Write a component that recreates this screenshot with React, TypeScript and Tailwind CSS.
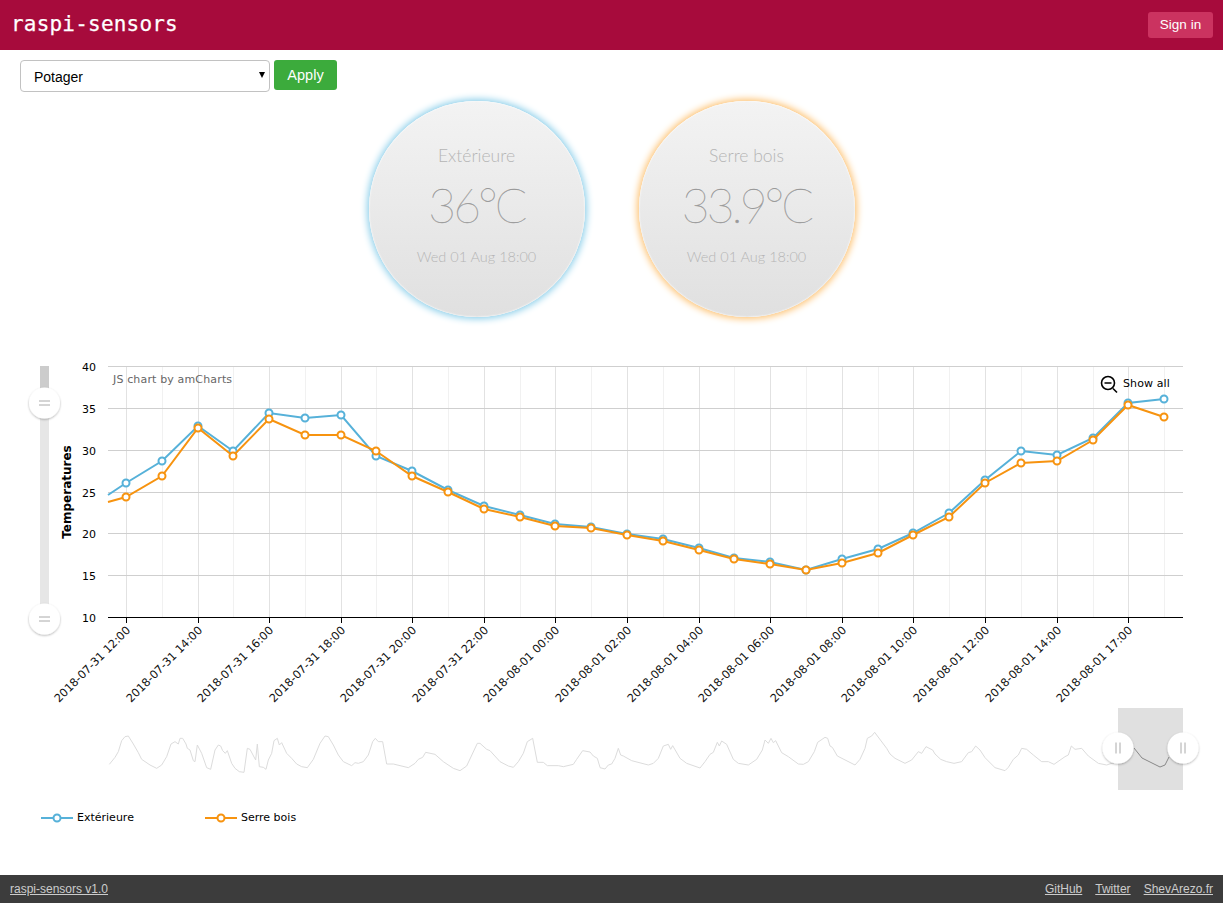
const xs = [126, 162, 198, 233, 269, 305, 341, 376, 412, 448, 484, 520, 555, 591, 627, 663, 699, 734, 770, 806, 842, 878, 913, 949, 985, 1021, 1057, 1093, 1128, 1164];
const blue = [483, 461, 426, 451, 413, 418, 415, 456, 471, 490, 506, 515, 524, 527, 534, 539, 548, 558, 562, 570, 559, 549, 533, 513, 480, 451, 455, 438, 403, 399];
const orange = [497, 476, 428, 456, 419, 435, 435, 451, 476, 492, 509, 517, 526, 528, 535, 541, 550, 559, 564, 570, 563, 553, 535, 517, 483, 463, 461, 440, 405, 417];

const gridY = [366.5, 408.5, 450.5, 492.5, 533.5, 575.5];
const yLabels = [["40", 371], ["35", 413], ["30", 455], ["25", 497], ["20", 538], ["15", 580], ["10", 622]] as const;

const ticks = [
  [126, "2018-07-31 12:00"],
  [198, "2018-07-31 14:00"],
  [269, "2018-07-31 16:00"],
  [341, "2018-07-31 18:00"],
  [412, "2018-07-31 20:00"],
  [484, "2018-07-31 22:00"],
  [555, "2018-08-01 00:00"],
  [627, "2018-08-01 02:00"],
  [699, "2018-08-01 04:00"],
  [770, "2018-08-01 06:00"],
  [842, "2018-08-01 08:00"],
  [913, "2018-08-01 10:00"],
  [985, "2018-08-01 12:00"],
  [1057, "2018-08-01 14:00"],
  [1128, "2018-08-01 17:00"],
] as const;

// scrollbar graph, read off the picture in 3x coordinates
const scrollA = [[28,133],[45,112],[55,95],[65,62],[75,50],[85,48],[100,72],[115,98],[125,118],[150,135],[170,145],[185,135],[200,110],[213,72],[225,65],[235,72],[240,55],[248,55],[258,72],[262,85],[270,90],[280,122],[285,125],[292,75],[305,100],[320,143],[332,148],[345,90],[355,75],[362,78],[368,92],[376,100],[382,92],[395,130],[405,145],[418,155],[432,157],[442,85],[450,88],[467,120],[472,72],[478,140],[490,142],[498,148],[505,120],[515,100],[522,62],[532,55],[538,75],[545,68],[560,100],[575,115],[590,132],[605,140],[622,143],[640,118],[660,70],[675,48],[685,50],[700,75],[715,105],[730,125],[755,137],[765,128],[775,130],[790,125],[805,105],[818,65],[826,55],[835,65],[848,65],[860,132],[880,132],[925,143],[945,130],[955,118],[968,112],[977,97],[1005,103],[1030,125],[1060,145],[1080,152],[1100,138],[1132,70],[1140,70],[1160,88],[1170,92],[1200,125],[1225,138],[1240,142],[1255,125],[1270,100],[1282,65],[1298,55],[1312,127],[1330,127],[1342,137],[1375,137],[1390,140],[1420,133],[1430,118],[1448,92],[1470,96],[1480,108],[1492,115],[1500,142]];
const scrollB = [[0,143],[15,147],[25,135],[35,132],[45,115],[55,85],[62,105],[70,108],[95,122],[145,135],[160,130],[175,115],[190,78],[205,73],[212,88],[218,77],[240,115],[260,130],[300,144],[315,125],[330,103],[340,97],[352,67],[358,78],[365,63],[380,73],[400,118],[415,130],[445,135],[470,118],[487,90],[495,60],[505,70],[513,55],[520,68],[527,62],[545,98],[565,110],[595,132],[610,133],[625,125],[643,95],[653,67],[675,52],[683,55],[690,78],[697,82],[712,108],[765,135],[780,118],[795,85],[802,55],[815,48],[824,37],[860,85],[870,102],[885,115],[915,130],[935,120],[955,95],[965,100],[978,80],[998,90],[1005,102],[1022,118],[1040,125],[1062,130],[1085,125],[1105,98],[1115,95],[1127,78],[1140,90],[1155,113],[1185,143],[1215,152],[1225,142],[1240,118],[1255,105],[1265,85],[1280,88],[1300,105],[1325,125],[1345,125],[1362,133],[1395,110],[1405,105],[1414,78],[1425,88],[1445,85],[1465,108],[1495,130],[1520,135],[1550,125]];
const scrollPoints = [
  ...scrollA.map(([x, y]) => `${100 + x / 3},${720 + y / 3}`),
  ...scrollB.map(([x, y]) => `${600 + x / 3},${720 + y / 3}`),
].join(" ");

const linePoints = (ys: number[], startY: number) =>
  `108,${startY} ` + ys.map((y, i) => `${xs[i]},${y}`).join(" ");

const Handle = ({ cx, cy, vertical }: { cx: number; cy: number; vertical?: boolean }) => (
  <g>
    <circle cx={cx} cy={cy} r="15.5" fill="#fff" filter="url(#handleShadow)" />
    {vertical ? (
      <path d={`M${cx - 5.5} ${cy - 2}h11M${cx - 5.5} ${cy + 2}h11`} stroke="#aaa" strokeWidth="1" />
    ) : (
      <path d={`M${cx - 2} ${cy - 5.5}v11M${cx + 2} ${cy - 5.5}v11`} stroke="#aaa" strokeWidth="1" />
    )}
  </g>
);

const Chart = () => (
  <svg viewBox="0 355 1223 445" className="block w-full h-[445px]" style={{ fontFamily: '"DejaVu Sans", sans-serif' }}>
    <defs>
      <filter id="handleShadow" x="-30%" y="-30%" width="160%" height="160%">
        <feDropShadow dx="0" dy="1" stdDeviation="1.2" floodColor="#000" floodOpacity="0.3" />
      </filter>
    </defs>

    {xs.map((x, i) => (
      <line key={x} x1={x + 0.5} x2={x + 0.5} y1="366" y2="617" stroke={i % 2 === 0 ? "#e2e2e2" : "#f1f1f1"} />
    ))}
    {gridY.map((y) => (
      <line key={y} x1="108" x2="1183" y1={y} y2={y} stroke="#cfcfcf" />
    ))}
    <line x1="108" x2="1183" y1="617.5" y2="617.5" stroke="#000" />
    {ticks.map(([x]) => (
      <line key={x} x1={x + 0.5} x2={x + 0.5} y1="617" y2="623" stroke="#000" />
    ))}

    {yLabels.map(([t, y]) => (
      <text key={t} x="96" y={y} textAnchor="end" fontSize="11" fill="#000">{t}</text>
    ))}
    <text transform="translate(71 492) rotate(-90)" textAnchor="middle" fontSize="12" fontWeight="bold" fill="#000">Temperatures</text>
    {ticks.map(([x, t]) => (
      <text key={t} transform={`translate(${x + 5} 631) rotate(-45)`} textAnchor="end" fontSize="11.3" fill="#111">{t}</text>
    ))}

    <text x="113" y="383" fontSize="11" letterSpacing="0.15" fill="#666">JS chart by amCharts</text>

    <polyline points={linePoints(blue, 495)} fill="none" stroke="#56b1d9" strokeWidth="2" />
    {xs.map((x, i) => (
      <circle key={x} cx={x} cy={blue[i]} r="3.5" fill="#fff" stroke="#56b1d9" strokeWidth="2" />
    ))}
    <polyline points={linePoints(orange, 502)} fill="none" stroke="#f7930f" strokeWidth="2" />
    {xs.map((x, i) => (
      <circle key={x} cx={x} cy={orange[i]} r="3.5" fill="#fff" stroke="#f7930f" strokeWidth="2" />
    ))}

    <circle cx="1108" cy="383" r="6.5" fill="#fff" stroke="#000" strokeWidth="1.6" />
    <path d="M1104.5 383h7M1113 388.5l4 4" stroke="#000" strokeWidth="1.6" fill="none" />
    <text x="1123" y="387" fontSize="11" letterSpacing="0.1" fill="#000">Show all</text>

    <rect x="40" y="366" width="9" height="25" fill="#cccccc" />
    <rect x="40" y="391" width="9" height="228" fill="#e6e6e6" />
    <Handle cx={44.5} cy={403} vertical />
    <Handle cx={44.5} cy={619} vertical />

    <rect x="1118" y="708" width="65" height="82" fill="#e0e0e0" />
    <polyline points={scrollPoints} fill="none" stroke="#dcdcdc" strokeWidth="1" />
    <polyline points="1134,748 1142,758 1148,761 1160,767 1165,765 1169,757" fill="none" stroke="#888" strokeWidth="1" />
    <Handle cx={1118} cy={748} />
    <Handle cx={1183} cy={748} />
  </svg>
);

const Gauge = ({ name, value, glow }: { name: string; value: string; glow: string }) => (
  <div
    className={`w-[216px] h-[216px] rounded-full bg-gradient-to-b from-[#f3f3f3] to-[#e0e0e0] flex flex-col items-center text-[#b5b5b5] ${glow}`}
    style={{ fontFamily: 'Lato, sans-serif' }}
  >
    <div className="mt-[44px] text-[17.5px] leading-[22px] font-light">{name}</div>
    <div className="mt-[10px] text-[48px] leading-[56px] font-thin tracking-[-3px] text-[#999] [-webkit-text-stroke:0.3px_#999]">{value}</div>
    <div className="mt-[14px] text-[14.5px] leading-[20px] font-light">Wed 01 Aug 18:00</div>
  </div>
);

const LegendItem = ({ color, label }: { color: string; label: string }) => (
  <div className="flex items-center gap-[4px] w-[164px]">
    <svg width="32" height="10" viewBox="0 0 32 10">
      <line x1="0" x2="32" y1="5" y2="5" stroke={color} strokeWidth="2" />
      <circle cx="16" cy="5" r="3.5" fill="#fff" stroke={color} strokeWidth="2" />
    </svg>
    <span className="text-[11px] text-black">{label}</span>
  </div>
);

export default function App() {
  return (
    <div className="h-screen flex flex-col bg-white overflow-hidden" style={{ fontFamily: '"Liberation Sans", Arial, sans-serif' }}>
      <header className="h-[50px] shrink-0 bg-[#a70b3c] flex items-center justify-between pl-[11px] pr-[10px]">
        <span className="text-white text-[21px] tracking-[0.2px] [-webkit-text-stroke:0.25px_white]" style={{ fontFamily: '"DejaVu Sans Mono", monospace' }}>raspi-sensors</span>
        <button className="h-[26px] w-[65px] rounded-[3px] bg-[#cb3360] text-white text-[13.5px] pt-[1px]">Sign in</button>
      </header>

      <div className="flex gap-[4px] pl-[20px] pt-[10px]">
        <div className="relative w-[250px] h-[32px]">
          <select className="w-full h-full appearance-none bg-white border-[1.5px] border-[#c2c2c2] rounded-[4px] pl-[13px] pt-[3px] text-[14px] text-black">
            <option>Potager</option>
          </select>
          <span className="absolute right-[5px] top-[12px] w-0 h-0 border-x-[3.5px] border-x-transparent border-t-[6px] border-t-black pointer-events-none" />
        </div>
        <button className="w-[63px] h-[30px] rounded-[3px] bg-[#3cab3c] text-white text-[14.5px] pt-[1px]">Apply</button>
      </div>

      <div className="flex justify-center gap-[54px] mt-[9px]">
        <Gauge name="Extérieure" value="36°C" glow="shadow-[0_0_7px_2px_#8ccfea,inset_0_0_2px_#ffffff]" />
        <Gauge name="Serre bois" value="33.9°C" glow="shadow-[0_0_7px_2px_#fdc272,inset_0_0_2px_#ffffff]" />
      </div>

      <div className="mt-[38px]">
        <Chart />
      </div>

      <div className="flex pl-[41px] mt-[10px]" style={{ fontFamily: '"DejaVu Sans", sans-serif' }}>
        <LegendItem color="#56b1d9" label="Extérieure" />
        <LegendItem color="#f7930f" label="Serre bois" />
      </div>

      <footer className="mt-auto h-[28px] shrink-0 bg-[#3c3c3c] flex items-center justify-between px-[10px] text-[12px] text-[#cccccc]">
        <a className="underline" href="#">raspi-sensors v1.0</a>
        <div className="flex gap-[13px]">
          <a className="underline" href="#">GitHub</a>
          <a className="underline" href="#">Twitter</a>
          <a className="underline" href="#">ShevArezo.fr</a>
        </div>
      </footer>
    </div>
  );
}
